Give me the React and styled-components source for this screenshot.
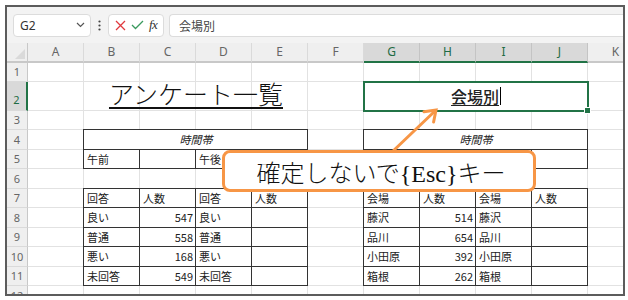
import React from 'react'
import styled, { createGlobalStyle } from 'styled-components'

const GlobalStyle = createGlobalStyle`
  body {
    margin: 0;
    background: #fff;
    font-family: "Noto Sans", "Noto Sans CJK JP", sans-serif;
  }
`

const Frame = styled.div`
  position: relative;
  margin: 5px 0 0 5px;
  width: 616px;
  height: 287px;
  border: 2px solid #5c5c5c;
  overflow: hidden;
  background: #fff;
`

/* formula bar */
const FormulaBar = styled.div`
  height: 36px;
  display: flex;
  align-items: center;
  padding-left: 6px;
  background: #f3f3f3;
`
const NameBox = styled.div`
  box-sizing: border-box;
  width: 78px;
  height: 23px;
  display: flex;
  align-items: center;
  justify-content: space-between;
  padding: 0 5px 0 6px;
  background: #fff;
  border: 1px solid #dcdcdc;
  border-radius: 4px;
  font-size: 12px;
  color: #333;
`
const Grip = styled.div`
  width: 17px;
  display: flex;
  justify-content: center;
`
const Buttons = styled.div`
  box-sizing: border-box;
  width: 56px;
  height: 23px;
  display: flex;
  align-items: center;
  justify-content: space-around;
  padding: 0 3px;
  background: #fff;
  border: 1px solid #dcdcdc;
  border-radius: 4px;
`
const Fx = styled.span`
  font-family: "Liberation Serif", serif;
  font-style: italic;
  font-size: 13px;
  color: #333;
  letter-spacing: -0.5px;
`
const Input = styled.div`
  flex: 1;
  box-sizing: border-box;
  height: 23px;
  margin-left: 5px;
  display: flex;
  align-items: center;
  padding-left: 9px;
  background: #fff;
  border: 1px solid #dcdcdc;
  border-right: none;
  border-radius: 4px 0 0 4px;
  font-family: "Noto Sans CJK JP", sans-serif;
  font-size: 12px;
  color: #444;
`

/* sheet */
const Sheet = styled.div`
  display: grid;
  grid-template-columns: 21px repeat(11, 56px);
  grid-template-rows: 19.5px 19px 29px repeat(10, 19.5px);
`
const Corner = styled.div`
  grid-row: 1;
  grid-column: 1;
  position: relative;
  background: #efefef;
  border-right: 1px solid #c8c8c8;
  border-bottom: 2px solid #c8c8c8;
  &::after {
    content: "";
    position: absolute;
    right: 2px;
    bottom: 2px;
    border-style: solid;
    border-width: 0 0 10px 10px;
    border-color: transparent transparent #dadada transparent;
  }
`
const ColHead = styled.div`
  grid-row: 1;
  grid-column: ${p => p.$col};
  display: flex;
  align-items: center;
  justify-content: center;
  background: ${p => (p.$active ? '#d9d9d9' : '#efefef')};
  color: ${p => (p.$active ? '#1e6b44' : '#666')};
  border-right: 1px solid ${p => (p.$active ? '#c4c4c4' : '#dadada')};
  border-bottom: 2px solid ${p => (p.$active ? '#217346' : '#c8c8c8')};
  font-size: 12px;
`
const RowHead = styled.div`
  grid-row: ${p => p.$row};
  grid-column: 1;
  display: flex;
  align-items: center;
  justify-content: center;
  background: ${p => (p.$active ? '#d9d9d9' : '#efefef')};
  color: ${p => (p.$active ? '#1e6b44' : '#666')};
  border-right: ${p => (p.$active ? '2px solid #217346' : '1px solid #c8c8c8')};
  border-bottom: 1px solid #dadada;
  font-size: 11px;
  padding-top: ${p => (p.$active ? '8px' : '0')};
`
const GridCell = styled.div`
  grid-row: ${p => p.$row};
  grid-column: ${p => p.$col};
  border-right: 1px solid #e2e2e2;
  border-bottom: 1px solid #e2e2e2;
`
const Title = styled.div`
  grid-row: 3;
  grid-column: 3 / span 4;
  display: flex;
  align-items: flex-end;
  justify-content: center;
  padding-bottom: 1px;
  font-family: "Liberation Serif", "Noto Sans CJK JP", serif;
  font-weight: 300;
  font-size: 25px;
  line-height: 28px;
  color: #111;
  text-decoration: underline;
  text-decoration-thickness: 1.5px;
  text-underline-offset: 3px;
  z-index: 1;
`
const Selection = styled.div`
  grid-row: 3;
  grid-column: 8 / span 4;
  margin: -1px;
  position: relative;
  display: flex;
  align-items: center;
  justify-content: center;
  border: 2px solid #217346;
  background: #fff;
  font-family: "Noto Sans CJK JP", sans-serif;
  font-weight: 500;
  font-size: 16px;
  color: #222;
  z-index: 2;
  span {
    text-decoration: underline;
    text-underline-offset: 2px;
  }
`
const Caret = styled.i`
  display: inline-block;
  width: 1px;
  height: 18px;
  margin-left: 1px;
  background: #000;
`
const Handle = styled.div`
  position: absolute;
  right: -4px;
  bottom: -4px;
  width: 5px;
  height: 5px;
  background: #217346;
  border: 1px solid #fff;
`
const Table = styled.div`
  grid-row: ${p => p.$row} / span ${p => p.$rows};
  grid-column: ${p => p.$col} / span 4;
  margin: -1px 0 0 -1px;
  display: grid;
  grid-template-columns: repeat(4, 1fr);
  grid-auto-rows: 1fr;
  border-top: 1px solid #333;
  border-left: 1px solid #333;
  background: #fff;
  z-index: 1;
`
const TCell = styled.div`
  grid-column: ${p => (p.$wide ? '1 / -1' : 'auto')};
  display: flex;
  align-items: center;
  justify-content: ${p => p.$align || 'flex-start'};
  padding: 0 2px 0 3px;
  border-right: 1px solid #333;
  border-bottom: 1px solid #333;
  font-family: "Noto Sans CJK JP", sans-serif;
  font-size: 11px;
  font-style: ${p => (p.$italic ? 'italic' : 'normal')};
  color: #222;
  white-space: nowrap;
`

/* annotation */
const Arrow = styled.svg`
  position: absolute;
  left: 378px;
  top: 98px;
  z-index: 3;
`
const Callout = styled.div`
  position: absolute;
  left: 215px;
  top: 143px;
  box-sizing: border-box;
  width: 314px;
  height: 42px;
  display: flex;
  align-items: center;
  justify-content: center;
  padding-left: 4px;
  background: #fff;
  border: 3px solid #f79646;
  border-radius: 8px;
  font-family: "Liberation Serif", "Noto Sans CJK JP", serif;
  font-weight: 300;
  font-size: 24px;
  color: #111;
  z-index: 4;
`

const COLS = ['A', 'B', 'C', 'D', 'E', 'F', 'G', 'H', 'I', 'J', 'K']
const ROWS = [1, 2, 3, 4, 5, 6, 7, 8, 9, 10, 11, 12]
const isActiveCol = c => c >= 6 && c <= 9

const answers = [
  ['良い', '547'],
  ['普通', '558'],
  ['悪い', '168'],
  ['未回答', '549'],
]
const venues = [
  ['藤沢', '514'],
  ['品川', '654'],
  ['小田原', '392'],
  ['箱根', '262'],
]

const TimeTable = ({ col, left, right }) => (
  <Table $row={5} $rows={2} $col={col}>
    <TCell $wide $italic $align="center">時間帯</TCell>
    <TCell>{left}</TCell>
    <TCell />
    <TCell>{right}</TCell>
    <TCell />
  </Table>
)

const CountTable = ({ col, label, rows }) => (
  <Table $row={8} $rows={5} $col={col}>
    <TCell>{label}</TCell>
    <TCell>人数</TCell>
    <TCell>{label}</TCell>
    <TCell>人数</TCell>
    {rows.map(([name, n]) => (
      <React.Fragment key={name}>
        <TCell>{name}</TCell>
        <TCell $align="flex-end">{n}</TCell>
        <TCell>{name}</TCell>
        <TCell />
      </React.Fragment>
    ))}
  </Table>
)

const App = () => (
  <>
    <GlobalStyle />
    <Frame>
      <FormulaBar>
        <NameBox>
          G2
          <svg width="9" height="6" viewBox="0 0 9 6">
            <polyline points="1,1 4.5,4.5 8,1" fill="none" stroke="#555" strokeWidth="1.2" />
          </svg>
        </NameBox>
        <Grip>
          <svg width="3" height="11" viewBox="0 0 3 11">
            <circle cx="1.5" cy="1.5" r="1.1" fill="#444" />
            <circle cx="1.5" cy="5.5" r="1.1" fill="#444" />
            <circle cx="1.5" cy="9.5" r="1.1" fill="#444" />
          </svg>
        </Grip>
        <Buttons>
          <svg width="11" height="11" viewBox="0 0 11 11">
            <path d="M1 1 L10 10 M10 1 L1 10" stroke="#e0393e" strokeWidth="1.3" />
          </svg>
          <svg width="13" height="10" viewBox="0 0 13 10">
            <polyline points="1,5 4.5,8.5 12,1" fill="none" stroke="#3a9a5e" strokeWidth="1.3" />
          </svg>
          <Fx>fx</Fx>
        </Buttons>
        <Input>会場別</Input>
      </FormulaBar>

      <Sheet>
        <Corner />
        {COLS.map((c, i) => (
          <ColHead key={c} $col={i + 2} $active={isActiveCol(i)}>{c}</ColHead>
        ))}
        {ROWS.map(r => (
          <React.Fragment key={r}>
            <RowHead $row={r + 1} $active={r === 2}>{r}</RowHead>
            {COLS.map((c, i) => (
              <GridCell key={c} $row={r + 1} $col={i + 2} />
            ))}
          </React.Fragment>
        ))}

        <Title>アンケート一覧</Title>
        <Selection>
          <span>会場別</span>
          <Caret />
          <Handle />
        </Selection>

        <TimeTable col={3} left="午前" right="午後" />
        <TimeTable col={8} left="" right="" />
        <CountTable col={3} label="回答" rows={answers} />
        <CountTable col={8} label="会場" rows={venues} />
      </Sheet>

      <Arrow width="60" height="56" viewBox="0 0 60 56">
        <line x1="7" y1="47" x2="50" y2="6" stroke="#f79646" strokeWidth="3" strokeLinecap="round" />
        <polyline points="48.6,17 51,5 39,6.8" fill="none" stroke="#f79646" strokeWidth="3" strokeLinejoin="miter" strokeLinecap="round" />
      </Arrow>
      <Callout>確定しないで{'{Esc}'}キー</Callout>
    </Frame>
  </>
)

export default App
